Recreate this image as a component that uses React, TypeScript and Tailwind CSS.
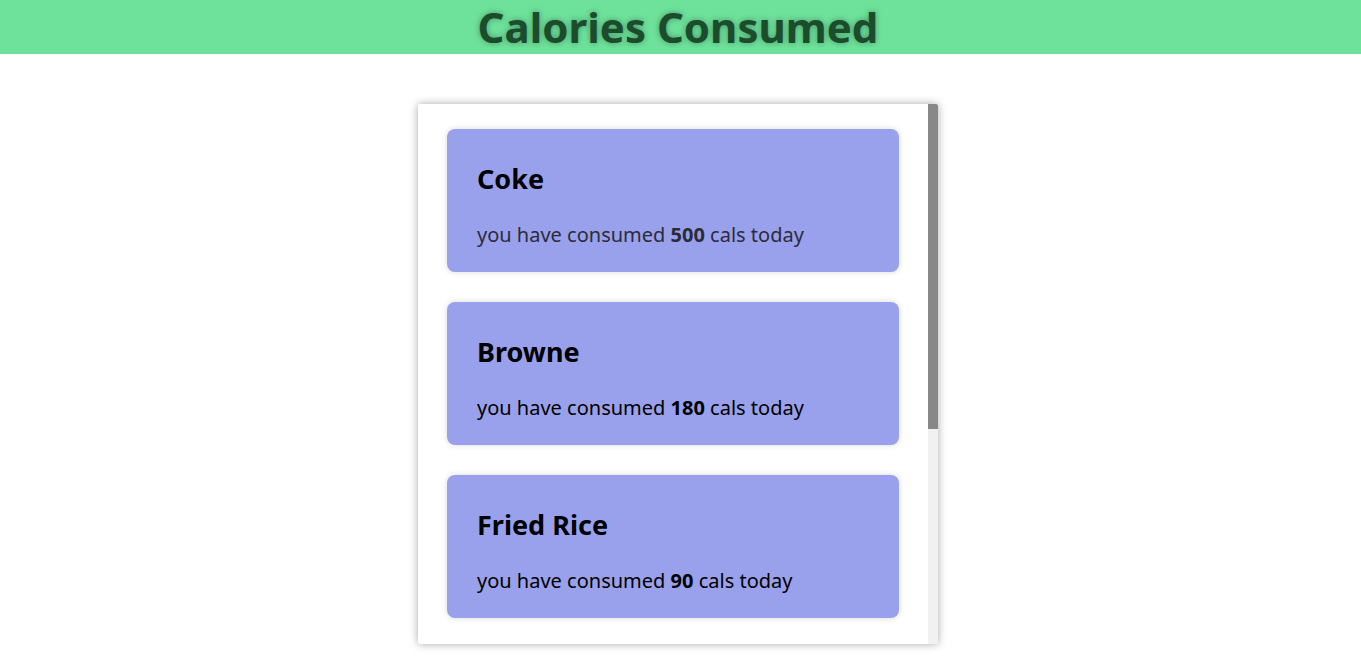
import React from "react";

const items = [
  { name: "Coke", cals: 500 },
  { name: "Browne", cals: 180 },
  { name: "Fried Rice", cals: 90 },
];

export default function App() {
  return (
    <div className="min-h-screen bg-white" style={{ fontFamily: '"Noto Sans", "Open Sans", sans-serif' }}>
      <header className="h-[54px] bg-[#6ee29b] flex items-center justify-center pr-[5px]">
        <h1 className="text-[42px] font-bold text-[#1b4d2c] leading-none [text-shadow:0_0_6px_rgba(0,0,0,0.35)]">
          Calories Consumed
        </h1>
      </header>
      <div className="flex justify-center pt-[50px] pr-[5px]">
        <div className="w-[520px] h-[540px] flex bg-white rounded-[2px] shadow-[0_0_8px_rgba(0,0,0,0.35)] overflow-hidden">
          <div className="flex-1 overflow-hidden px-[29px] pt-[25px] flex flex-col gap-[30px]">
            {items.map((it, i) => (
              <div
                key={it.name}
                className="shrink-0 h-[143px] rounded-[8px] bg-[#9aa1ec] shadow-[0_0_6px_rgba(0,0,0,0.15)] px-[30px] pt-[34px]"
              >
                <h2 className="text-[27px] font-bold text-black leading-[32px]">{it.name}</h2>
                <p className={`mt-[26px] text-[20px] leading-[28px] ${i === 0 ? "text-[#2b2b3a]" : "text-black"}`}>
                  you have consumed <b>{it.cals}</b> cals today
                </p>
              </div>
            ))}
          </div>
          <div className="w-[10px] shrink-0 bg-[#f1f1f1]">
            <div className="h-[325px] bg-[#888]" />
          </div>
        </div>
      </div>
    </div>
  );
}
